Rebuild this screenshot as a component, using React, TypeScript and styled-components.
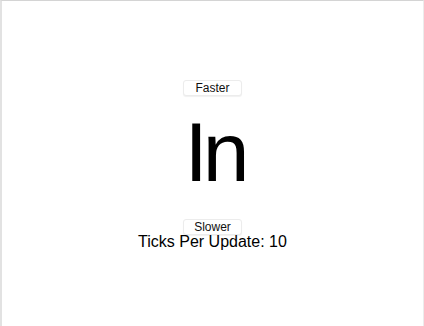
import React, { useState } from "react";
import styled, { createGlobalStyle } from "styled-components";

const GlobalStyle = createGlobalStyle`
  html, body {
    margin: 0;
    padding: 0;
    background: #ffffff;
  }
  body {
    font-family: "Liberation Sans", Arial, sans-serif;
    color: #000;
  }
`;

const Frame = styled.div`
  box-sizing: border-box;
  width: 424px;
  height: 326px;
  border-top: 1px solid #d4d4d4;
  border-left: 2px solid #e2e2e2;
  border-right: 1px solid #ececec;
  position: relative;
  overflow: hidden;
`;

const ScrollThumb = styled.div`
  position: absolute;
  left: -2px;
  top: 44px;
  width: 2px;
  height: 28px;
  background: #b5b5b5;
`;

const Counter = styled.div`
  display: flex;
  flex-direction: column;
  align-items: center;
  padding-top: 79px;
`;

const Button = styled.button`
  box-sizing: border-box;
  width: 59px;
  height: 16px;
  padding: 0;
  font-family: "Liberation Sans", Arial, sans-serif;
  font-size: 12px;
  line-height: 14px;
  color: #111;
  background: #fff;
  border: 1px solid #ececec;
  border-radius: 3px;
  box-shadow: 0 1px 1px rgba(0, 0, 0, 0.06);
  cursor: pointer;
`;

const Word = styled.div`
  font-size: 84px;
  line-height: 84px;
  margin-top: 14px;
  margin-bottom: 25px;
  letter-spacing: -5px;
  padding-left: 4px;
`;

const Ticks = styled.div`
  font-size: 16px;
  line-height: 20px;
  margin-top: -3px;
`;

export default function App() {
  const [ticks, setTicks] = useState(10);
  return (
    <>
      <GlobalStyle />
      <Frame>
        <ScrollThumb />
        <Counter>
          <Button onClick={() => setTicks(Math.max(1, ticks - 1))}>Faster</Button>
          <Word>In</Word>
          <Button onClick={() => setTicks(ticks + 1)}>Slower</Button>
          <Ticks>Ticks Per Update: {ticks}</Ticks>
        </Counter>
      </Frame>
    </>
  );
}
